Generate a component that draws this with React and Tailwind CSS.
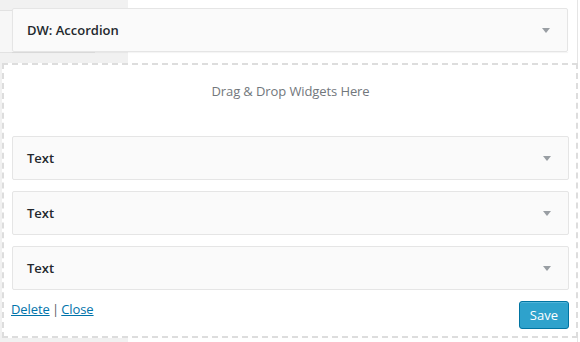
import React from 'react'

function Caret() {
  return (
    <svg width="8" height="5" viewBox="0 0 8 5" className="shrink-0">
      <polygon points="0,0 8,0 4,5" fill="#999ea3" />
    </svg>
  )
}

function WidgetBar({ title }) {
  return (
    <div className="h-[44px] flex items-center justify-between pl-[14px] pr-[17px] bg-[#fafafa] border border-[#e5e5e5] rounded-[2px]">
      <h3 className="text-[13px] font-[560] leading-[20px] text-[#23282d]">{title}</h3>
      <Caret />
    </div>
  )
}

export default function App() {
  const widgets = ['Text', 'Text', 'Text']

  return (
    <div
      className="relative w-[580px] h-[342px] overflow-hidden bg-white"
      style={{ fontFamily: '"Open Sans", "Liberation Sans", sans-serif' }}
    >
      {/* page backdrop: available widgets column + sidebar column */}
      <div className="absolute inset-0 flex">
        <div className="relative w-[128px] bg-[#f1f1f1]">
          <div className="absolute left-0 top-[10px] w-[95px] h-[43px] bg-[#f7f7f7] border-b border-t border-r border-[#e2e2e2]" />
        </div>
        <div className="w-[450px] bg-white border-r border-[#e5e5e5]" />
      </div>

      <div className="relative px-[2px] pt-[8px]">
        <div className="ml-[10px] mr-[10px] shadow-[0_1px_1px_rgba(0,0,0,0.04)]">
          <WidgetBar title="DW: Accordion" />
        </div>

        <div className="mt-[11px] w-[576px] border-2 border-dashed border-[#dddddd] bg-white pl-[8px] pr-[7px]">
          <p className="pt-[16px] h-[71px] text-center text-[13px] tracking-[-0.1px] leading-[20px] text-[#72777c]">
            Drag &amp; Drop Widgets Here
          </p>
          <div className="flex flex-col gap-[11px]">
            {widgets.map((w, i) => (
              <WidgetBar key={i} title={w} />
            ))}
          </div>
          <div className="flex justify-between items-start h-[46px]">
            <div className="mt-[9px] -ml-[1px] text-[13px] tracking-[-0.1px] leading-[20px] text-[#555d66]">
              <a href="#" className="text-[#0073aa] underline">Delete</a>
              <span className="mx-[-1px]"> | </span>
              <a href="#" className="text-[#0073aa] underline">Close</a>
            </div>
            <button
              type="button"
              className="mt-[11px] h-[28px] px-[10px] rounded-[3px] bg-[#2ea2cc] border border-[#0074a2] text-white text-[13px] leading-[26px] shadow-[inset_0_1px_0_rgba(120,200,230,0.5)]"
            >
              Save
            </button>
          </div>
        </div>
      </div>
    </div>
  )
}
